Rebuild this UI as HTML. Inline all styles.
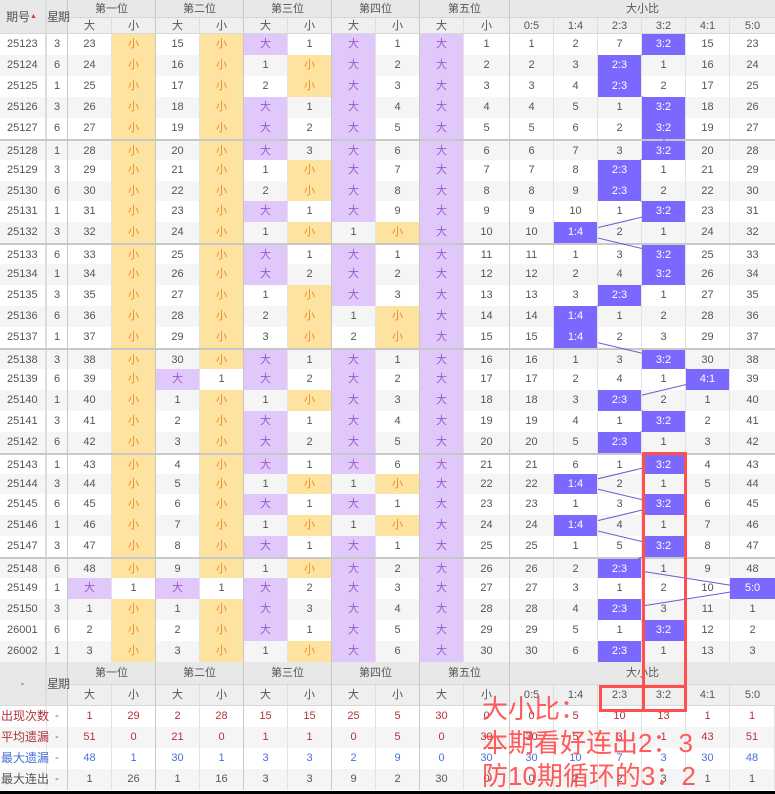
<!DOCTYPE html>
<html><head><meta charset="utf-8"><style>
*{margin:0;padding:0;box-sizing:border-box;white-space:nowrap}
body{width:775px;height:794px;background:#000;font-family:"Liberation Sans","Noto Sans CJK SC",sans-serif;font-size:11px;color:#555;position:relative;overflow:hidden}
#w{position:absolute;left:0;top:0;width:775px;height:791px;background:#fff}
.r{position:absolute;left:0;width:775px;height:20.93px;display:flex;background:#fff}
.r.g{background:#f5f5f5}
.r.t{border-top:2px solid #c8c8c8}
.r span{display:block;height:100%;text-align:center;line-height:20.9px;border-right:1px solid #e2e2e2;flex:none}
.r span:nth-child(1){width:47px;border-right:2px solid #ddd;text-align:left;padding-left:7px}
.r span:nth-child(2){width:21px;border-right:1px solid #c8c8c8}
.r span:nth-child(n+3){width:44px}
.r span:nth-child(4),.r span:nth-child(6),.r span:nth-child(8),.r span:nth-child(10){border-right:1px solid #c8c8c8}
.r span:nth-child(12){width:46px;border-right:1px solid #c8c8c8}
.r span:nth-child(18){width:45px;border-right:none}
.r span.d{background:#e0c8fa;color:#9b59d0}
.r span.s{background:#fee29f;color:#f08c2a}
.r span.h{background:#7b68fe;color:#fff;position:relative;z-index:2}
.hd{position:absolute;background:#e8e8e8;color:#555;text-align:center;border-right:1px solid #c8c8c8;border-bottom:1px solid #d8d8d8;overflow:visible}
.h2{background:#efefef}
.wk{text-align:left!important;padding-left:0;letter-spacing:-1px;z-index:3}
.st{position:absolute;left:0;width:775px;height:21px;display:flex;background:#fff}
.st.g{background:#f5f5f5}
.st span{display:block;height:100%;line-height:21px;text-align:center;flex:none;border-right:1px solid #e2e2e2;overflow:visible}
.st span:nth-child(1){width:47px;text-align:left;padding-left:1px;font-size:12px;position:relative;z-index:2}
.st span:nth-child(2){width:21px;border-right:1px solid #c8c8c8}
.st span:nth-child(n+3){width:44px}
.st span:nth-child(4),.st span:nth-child(6),.st span:nth-child(8),.st span:nth-child(10){border-right:1px solid #c8c8c8}
.st span:nth-child(12){width:46px;border-right:1px solid #c8c8c8}
.st span:nth-child(18){width:45px}
.c1{color:#b0343a}.c3{color:#4a6fd6}.c4{color:#555}
svg{position:absolute;left:0;top:0;z-index:1}
#ov{z-index:5}
.note{position:absolute;left:482px;color:#ff4a4a;font-size:26px;line-height:33px;z-index:6;white-space:nowrap;opacity:.9}
</style></head><body><div id="w">
<div class="hd" style="left:0;top:0;width:47px;height:34px;line-height:34px;font-size:12px;text-align:left;padding-left:6px;border-right:2px solid #ddd">期号<span style="font-size:7px;color:#e33;vertical-align:3px">▲</span></div>
<div class="hd wk" style="left:47px;top:0;width:21px;height:34px;line-height:34px;font-size:12px">星期</div>
<div class="hd" style="left:68px;top:0;width:88px;height:18px;line-height:18px">第一位</div>
<div class="hd" style="left:156px;top:0;width:88px;height:18px;line-height:18px">第二位</div>
<div class="hd" style="left:244px;top:0;width:88px;height:18px;line-height:18px">第三位</div>
<div class="hd" style="left:332px;top:0;width:88px;height:18px;line-height:18px">第四位</div>
<div class="hd" style="left:420px;top:0;width:90px;height:18px;line-height:18px">第五位</div>
<div class="hd" style="left:510px;top:0;width:265px;height:18px;line-height:18px;border-right:none">大小比</div>
<div class="hd h2" style="left:68px;top:18px;width:44px;height:16px;line-height:16px;border-right-color:#ddd">大</div>
<div class="hd h2" style="left:112px;top:18px;width:44px;height:16px;line-height:16px">小</div>
<div class="hd h2" style="left:156px;top:18px;width:44px;height:16px;line-height:16px;border-right-color:#ddd">大</div>
<div class="hd h2" style="left:200px;top:18px;width:44px;height:16px;line-height:16px">小</div>
<div class="hd h2" style="left:244px;top:18px;width:44px;height:16px;line-height:16px;border-right-color:#ddd">大</div>
<div class="hd h2" style="left:288px;top:18px;width:44px;height:16px;line-height:16px">小</div>
<div class="hd h2" style="left:332px;top:18px;width:44px;height:16px;line-height:16px;border-right-color:#ddd">大</div>
<div class="hd h2" style="left:376px;top:18px;width:44px;height:16px;line-height:16px">小</div>
<div class="hd h2" style="left:420px;top:18px;width:44px;height:16px;line-height:16px;border-right-color:#ddd">大</div>
<div class="hd h2" style="left:464px;top:18px;width:46px;height:16px;line-height:16px">小</div>
<div class="hd h2" style="left:510px;top:18px;width:44px;height:16px;line-height:16px;border-right-color:#ddd">0:5</div>
<div class="hd h2" style="left:554px;top:18px;width:44px;height:16px;line-height:16px;border-right-color:#ddd">1:4</div>
<div class="hd h2" style="left:598px;top:18px;width:44px;height:16px;line-height:16px;border-right-color:#ddd">2:3</div>
<div class="hd h2" style="left:642px;top:18px;width:44px;height:16px;line-height:16px;border-right-color:#ddd">3:2</div>
<div class="hd h2" style="left:686px;top:18px;width:44px;height:16px;line-height:16px;border-right-color:#ddd">4:1</div>
<div class="hd h2" style="left:730px;top:18px;width:45px;height:16px;line-height:16px;border-right:none">5:0</div>

<svg width="775" height="794"><polyline fill="none" stroke="#6a5acd" stroke-width="1" points="664,44.5 620,65.4 620,86.3 664,107.3 664,128.2 664,149.1 620,170 620,191 664,211.9 576,232.8 664,253.8 664,274.7 620,295.6 576,316.5 576,337.5 664,358.4 708,379.3 620,400.3 664,421.2 620,442.1 664,463 576,484 664,504.9 576,525.8 664,546.8 620,567.7 752,588.6 620,609.5 664,630.5 620,651.4"/></svg>

<div class="r" style="top:34px"><span>25123</span><span>3</span><span>23</span><span class="s">小</span><span>15</span><span class="s">小</span><span class="d">大</span><span>1</span><span class="d">大</span><span>1</span><span class="d">大</span><span>1</span><span>1</span><span>2</span><span>7</span><span class="h">3:2</span><span>15</span><span>23</span></div>
<div class="r g" style="top:54.93px"><span>25124</span><span>6</span><span>24</span><span class="s">小</span><span>16</span><span class="s">小</span><span>1</span><span class="s">小</span><span class="d">大</span><span>2</span><span class="d">大</span><span>2</span><span>2</span><span>3</span><span class="h">2:3</span><span>1</span><span>16</span><span>24</span></div>
<div class="r" style="top:75.86px"><span>25125</span><span>1</span><span>25</span><span class="s">小</span><span>17</span><span class="s">小</span><span>2</span><span class="s">小</span><span class="d">大</span><span>3</span><span class="d">大</span><span>3</span><span>3</span><span>4</span><span class="h">2:3</span><span>2</span><span>17</span><span>25</span></div>
<div class="r g" style="top:96.79px"><span>25126</span><span>3</span><span>26</span><span class="s">小</span><span>18</span><span class="s">小</span><span class="d">大</span><span>1</span><span class="d">大</span><span>4</span><span class="d">大</span><span>4</span><span>4</span><span>5</span><span>1</span><span class="h">3:2</span><span>18</span><span>26</span></div>
<div class="r" style="top:117.72px"><span>25127</span><span>6</span><span>27</span><span class="s">小</span><span>19</span><span class="s">小</span><span class="d">大</span><span>2</span><span class="d">大</span><span>5</span><span class="d">大</span><span>5</span><span>5</span><span>6</span><span>2</span><span class="h">3:2</span><span>19</span><span>27</span></div>
<div class="r g t" style="top:138.65px"><span>25128</span><span>1</span><span>28</span><span class="s">小</span><span>20</span><span class="s">小</span><span class="d">大</span><span>3</span><span class="d">大</span><span>6</span><span class="d">大</span><span>6</span><span>6</span><span>7</span><span>3</span><span class="h">3:2</span><span>20</span><span>28</span></div>
<div class="r" style="top:159.58px"><span>25129</span><span>3</span><span>29</span><span class="s">小</span><span>21</span><span class="s">小</span><span>1</span><span class="s">小</span><span class="d">大</span><span>7</span><span class="d">大</span><span>7</span><span>7</span><span>8</span><span class="h">2:3</span><span>1</span><span>21</span><span>29</span></div>
<div class="r g" style="top:180.51px"><span>25130</span><span>6</span><span>30</span><span class="s">小</span><span>22</span><span class="s">小</span><span>2</span><span class="s">小</span><span class="d">大</span><span>8</span><span class="d">大</span><span>8</span><span>8</span><span>9</span><span class="h">2:3</span><span>2</span><span>22</span><span>30</span></div>
<div class="r" style="top:201.44px"><span>25131</span><span>1</span><span>31</span><span class="s">小</span><span>23</span><span class="s">小</span><span class="d">大</span><span>1</span><span class="d">大</span><span>9</span><span class="d">大</span><span>9</span><span>9</span><span>10</span><span>1</span><span class="h">3:2</span><span>23</span><span>31</span></div>
<div class="r g" style="top:222.37px"><span>25132</span><span>3</span><span>32</span><span class="s">小</span><span>24</span><span class="s">小</span><span>1</span><span class="s">小</span><span>1</span><span class="s">小</span><span class="d">大</span><span>10</span><span>10</span><span class="h">1:4</span><span>2</span><span>1</span><span>24</span><span>32</span></div>
<div class="r t" style="top:243.3px"><span>25133</span><span>6</span><span>33</span><span class="s">小</span><span>25</span><span class="s">小</span><span class="d">大</span><span>1</span><span class="d">大</span><span>1</span><span class="d">大</span><span>11</span><span>11</span><span>1</span><span>3</span><span class="h">3:2</span><span>25</span><span>33</span></div>
<div class="r g" style="top:264.23px"><span>25134</span><span>1</span><span>34</span><span class="s">小</span><span>26</span><span class="s">小</span><span class="d">大</span><span>2</span><span class="d">大</span><span>2</span><span class="d">大</span><span>12</span><span>12</span><span>2</span><span>4</span><span class="h">3:2</span><span>26</span><span>34</span></div>
<div class="r" style="top:285.16px"><span>25135</span><span>3</span><span>35</span><span class="s">小</span><span>27</span><span class="s">小</span><span>1</span><span class="s">小</span><span class="d">大</span><span>3</span><span class="d">大</span><span>13</span><span>13</span><span>3</span><span class="h">2:3</span><span>1</span><span>27</span><span>35</span></div>
<div class="r g" style="top:306.09px"><span>25136</span><span>6</span><span>36</span><span class="s">小</span><span>28</span><span class="s">小</span><span>2</span><span class="s">小</span><span>1</span><span class="s">小</span><span class="d">大</span><span>14</span><span>14</span><span class="h">1:4</span><span>1</span><span>2</span><span>28</span><span>36</span></div>
<div class="r" style="top:327.02px"><span>25137</span><span>1</span><span>37</span><span class="s">小</span><span>29</span><span class="s">小</span><span>3</span><span class="s">小</span><span>2</span><span class="s">小</span><span class="d">大</span><span>15</span><span>15</span><span class="h">1:4</span><span>2</span><span>3</span><span>29</span><span>37</span></div>
<div class="r g t" style="top:347.95px"><span>25138</span><span>3</span><span>38</span><span class="s">小</span><span>30</span><span class="s">小</span><span class="d">大</span><span>1</span><span class="d">大</span><span>1</span><span class="d">大</span><span>16</span><span>16</span><span>1</span><span>3</span><span class="h">3:2</span><span>30</span><span>38</span></div>
<div class="r" style="top:368.88px"><span>25139</span><span>6</span><span>39</span><span class="s">小</span><span class="d">大</span><span>1</span><span class="d">大</span><span>2</span><span class="d">大</span><span>2</span><span class="d">大</span><span>17</span><span>17</span><span>2</span><span>4</span><span>1</span><span class="h">4:1</span><span>39</span></div>
<div class="r g" style="top:389.81px"><span>25140</span><span>1</span><span>40</span><span class="s">小</span><span>1</span><span class="s">小</span><span>1</span><span class="s">小</span><span class="d">大</span><span>3</span><span class="d">大</span><span>18</span><span>18</span><span>3</span><span class="h">2:3</span><span>2</span><span>1</span><span>40</span></div>
<div class="r" style="top:410.74px"><span>25141</span><span>3</span><span>41</span><span class="s">小</span><span>2</span><span class="s">小</span><span class="d">大</span><span>1</span><span class="d">大</span><span>4</span><span class="d">大</span><span>19</span><span>19</span><span>4</span><span>1</span><span class="h">3:2</span><span>2</span><span>41</span></div>
<div class="r g" style="top:431.67px"><span>25142</span><span>6</span><span>42</span><span class="s">小</span><span>3</span><span class="s">小</span><span class="d">大</span><span>2</span><span class="d">大</span><span>5</span><span class="d">大</span><span>20</span><span>20</span><span>5</span><span class="h">2:3</span><span>1</span><span>3</span><span>42</span></div>
<div class="r t" style="top:452.6px"><span>25143</span><span>1</span><span>43</span><span class="s">小</span><span>4</span><span class="s">小</span><span class="d">大</span><span>1</span><span class="d">大</span><span>6</span><span class="d">大</span><span>21</span><span>21</span><span>6</span><span>1</span><span class="h">3:2</span><span>4</span><span>43</span></div>
<div class="r g" style="top:473.53px"><span>25144</span><span>3</span><span>44</span><span class="s">小</span><span>5</span><span class="s">小</span><span>1</span><span class="s">小</span><span>1</span><span class="s">小</span><span class="d">大</span><span>22</span><span>22</span><span class="h">1:4</span><span>2</span><span>1</span><span>5</span><span>44</span></div>
<div class="r" style="top:494.46px"><span>25145</span><span>6</span><span>45</span><span class="s">小</span><span>6</span><span class="s">小</span><span class="d">大</span><span>1</span><span class="d">大</span><span>1</span><span class="d">大</span><span>23</span><span>23</span><span>1</span><span>3</span><span class="h">3:2</span><span>6</span><span>45</span></div>
<div class="r g" style="top:515.39px"><span>25146</span><span>1</span><span>46</span><span class="s">小</span><span>7</span><span class="s">小</span><span>1</span><span class="s">小</span><span>1</span><span class="s">小</span><span class="d">大</span><span>24</span><span>24</span><span class="h">1:4</span><span>4</span><span>1</span><span>7</span><span>46</span></div>
<div class="r" style="top:536.32px"><span>25147</span><span>3</span><span>47</span><span class="s">小</span><span>8</span><span class="s">小</span><span class="d">大</span><span>1</span><span class="d">大</span><span>1</span><span class="d">大</span><span>25</span><span>25</span><span>1</span><span>5</span><span class="h">3:2</span><span>8</span><span>47</span></div>
<div class="r g t" style="top:557.25px"><span>25148</span><span>6</span><span>48</span><span class="s">小</span><span>9</span><span class="s">小</span><span>1</span><span class="s">小</span><span class="d">大</span><span>2</span><span class="d">大</span><span>26</span><span>26</span><span>2</span><span class="h">2:3</span><span>1</span><span>9</span><span>48</span></div>
<div class="r" style="top:578.18px"><span>25149</span><span>1</span><span class="d">大</span><span>1</span><span class="d">大</span><span>1</span><span class="d">大</span><span>2</span><span class="d">大</span><span>3</span><span class="d">大</span><span>27</span><span>27</span><span>3</span><span>1</span><span>2</span><span>10</span><span class="h">5:0</span></div>
<div class="r g" style="top:599.11px"><span>25150</span><span>3</span><span>1</span><span class="s">小</span><span>1</span><span class="s">小</span><span class="d">大</span><span>3</span><span class="d">大</span><span>4</span><span class="d">大</span><span>28</span><span>28</span><span>4</span><span class="h">2:3</span><span>3</span><span>11</span><span>1</span></div>
<div class="r" style="top:620.04px"><span>26001</span><span>6</span><span>2</span><span class="s">小</span><span>2</span><span class="s">小</span><span class="d">大</span><span>1</span><span class="d">大</span><span>5</span><span class="d">大</span><span>29</span><span>29</span><span>5</span><span>1</span><span class="h">3:2</span><span>12</span><span>2</span></div>
<div class="r g" style="top:640.97px"><span>26002</span><span>1</span><span>3</span><span class="s">小</span><span>3</span><span class="s">小</span><span>1</span><span class="s">小</span><span class="d">大</span><span>6</span><span class="d">大</span><span>30</span><span>30</span><span>6</span><span class="h">2:3</span><span>1</span><span>13</span><span>3</span></div>

<div class="hd" style="left:0;top:662px;width:47px;height:44px;line-height:44px;border-right:2px solid #ddd">-</div>
<div class="hd wk" style="left:47px;top:662px;width:21px;height:44px;line-height:44px;font-size:12px">星期</div>
<div class="hd" style="left:68px;top:662px;width:88px;height:23px;line-height:23px">第一位</div>
<div class="hd" style="left:156px;top:662px;width:88px;height:23px;line-height:23px">第二位</div>
<div class="hd" style="left:244px;top:662px;width:88px;height:23px;line-height:23px">第三位</div>
<div class="hd" style="left:332px;top:662px;width:88px;height:23px;line-height:23px">第四位</div>
<div class="hd" style="left:420px;top:662px;width:90px;height:23px;line-height:23px">第五位</div>
<div class="hd" style="left:510px;top:662px;width:265px;height:23px;line-height:23px;border-right:none">大小比</div>
<div class="hd h2" style="left:68px;top:685px;width:44px;height:21px;line-height:21px;border-right-color:#ddd">大</div>
<div class="hd h2" style="left:112px;top:685px;width:44px;height:21px;line-height:21px">小</div>
<div class="hd h2" style="left:156px;top:685px;width:44px;height:21px;line-height:21px;border-right-color:#ddd">大</div>
<div class="hd h2" style="left:200px;top:685px;width:44px;height:21px;line-height:21px">小</div>
<div class="hd h2" style="left:244px;top:685px;width:44px;height:21px;line-height:21px;border-right-color:#ddd">大</div>
<div class="hd h2" style="left:288px;top:685px;width:44px;height:21px;line-height:21px">小</div>
<div class="hd h2" style="left:332px;top:685px;width:44px;height:21px;line-height:21px;border-right-color:#ddd">大</div>
<div class="hd h2" style="left:376px;top:685px;width:44px;height:21px;line-height:21px">小</div>
<div class="hd h2" style="left:420px;top:685px;width:44px;height:21px;line-height:21px;border-right-color:#ddd">大</div>
<div class="hd h2" style="left:464px;top:685px;width:46px;height:21px;line-height:21px">小</div>
<div class="hd h2" style="left:510px;top:685px;width:44px;height:21px;line-height:21px;border-right-color:#ddd">0:5</div>
<div class="hd h2" style="left:554px;top:685px;width:44px;height:21px;line-height:21px;border-right-color:#ddd">1:4</div>
<div class="hd h2" style="left:598px;top:685px;width:44px;height:21px;line-height:21px;border-right-color:#ddd">2:3</div>
<div class="hd h2" style="left:642px;top:685px;width:44px;height:21px;line-height:21px;border-right-color:#ddd">3:2</div>
<div class="hd h2" style="left:686px;top:685px;width:44px;height:21px;line-height:21px;border-right-color:#ddd">4:1</div>
<div class="hd h2" style="left:730px;top:685px;width:45px;height:21px;line-height:21px;border-right:none">5:0</div>

<div class="st c1" style="top:706px"><span>出现次数</span><span>-</span><span>1</span><span>29</span><span>2</span><span>28</span><span>15</span><span>15</span><span>25</span><span>5</span><span>30</span><span>0</span><span>0</span><span>5</span><span>10</span><span>13</span><span>1</span><span>1</span></div>
<div class="st g c1" style="top:727px"><span>平均遗漏</span><span>-</span><span>51</span><span>0</span><span>21</span><span>0</span><span>1</span><span>1</span><span>0</span><span>5</span><span>0</span><span>30</span><span>30</span><span>5</span><span>3</span><span>1</span><span>43</span><span>51</span></div>
<div class="st c3" style="top:748px"><span>最大遗漏</span><span>-</span><span>48</span><span>1</span><span>30</span><span>1</span><span>3</span><span>3</span><span>2</span><span>9</span><span>0</span><span>30</span><span>30</span><span>10</span><span>7</span><span>3</span><span>30</span><span>48</span></div>
<div class="st g c4" style="top:769px"><span>最大连出</span><span>-</span><span>1</span><span>26</span><span>1</span><span>16</span><span>3</span><span>3</span><span>9</span><span>2</span><span>30</span><span>0</span><span>0</span><span>2</span><span>2</span><span>3</span><span>1</span><span>1</span></div>

<svg id="ov" width="775" height="794"><rect x="643.5" y="453.5" width="42" height="257" fill="none" stroke="#ff4f4f" stroke-width="3"/><rect x="600.5" y="686.5" width="85" height="24" fill="none" stroke="#ff4f4f" stroke-width="3"/></svg>
<div class="note" style="top:693px">大小比：</div>
<div class="note" style="top:727px">本期看好连出2：3</div>
<div class="note" style="top:760px">防10期循环的3：2</div>
</div></body></html>
